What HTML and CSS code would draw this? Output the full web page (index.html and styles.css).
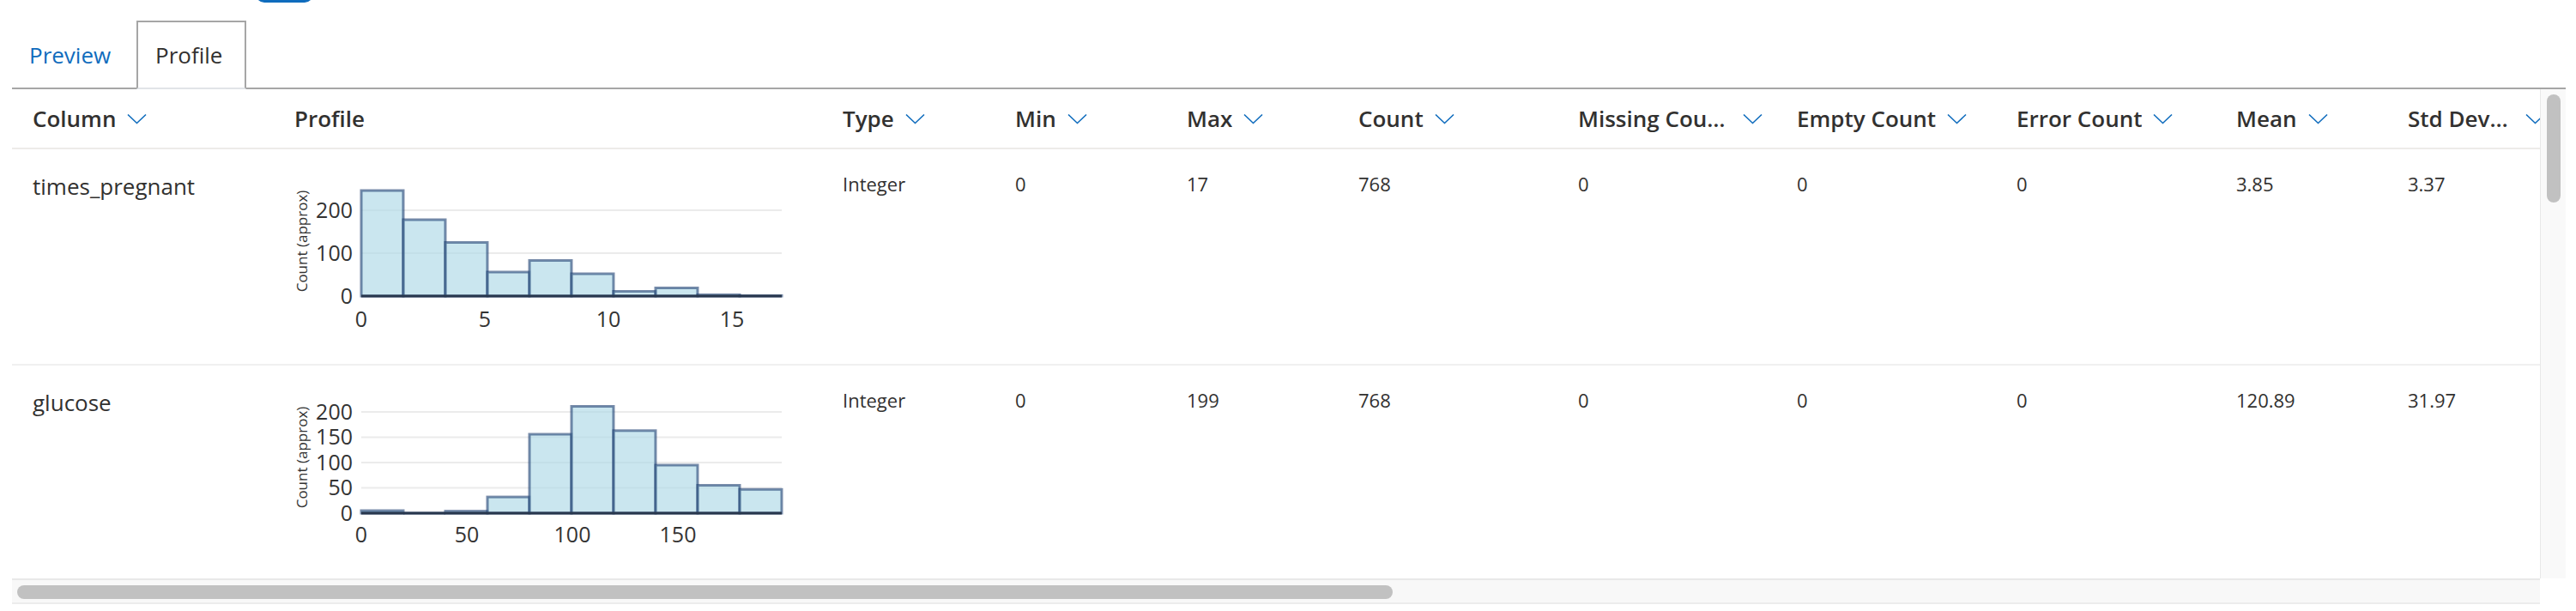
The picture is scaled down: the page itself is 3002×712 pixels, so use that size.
FILE: index.html
```html
<!DOCTYPE html>
<html lang="en">
<head>
<meta charset="utf-8">
<title>Profile</title>
<link rel="stylesheet" href="styles.css">
</head>
<body>
<div class="topbar"><div class="pill"></div></div>
<div class="tabs">
  <div class="tab link">Preview</div>
  <div class="tab active">Profile</div>
</div>
<div class="frame">
  <div class="viewport">
    <div class="table">
      <div class="hrow">
        <div class="hcell"><span class="htext">Column</span><svg class="chev" viewBox="0 0 23 13"><path d="M1 1.5 L11.5 11.5 L22 1.5"/></svg></div>
        <div class="hcell"><span class="htext">Profile</span></div>
        <div class="hcell"><span class="htext">Type</span><svg class="chev" viewBox="0 0 23 13"><path d="M1 1.5 L11.5 11.5 L22 1.5"/></svg></div>
        <div class="hcell"><span class="htext">Min</span><svg class="chev" viewBox="0 0 23 13"><path d="M1 1.5 L11.5 11.5 L22 1.5"/></svg></div>
        <div class="hcell"><span class="htext">Max</span><svg class="chev" viewBox="0 0 23 13"><path d="M1 1.5 L11.5 11.5 L22 1.5"/></svg></div>
        <div class="hcell"><span class="htext">Count</span><svg class="chev" viewBox="0 0 23 13"><path d="M1 1.5 L11.5 11.5 L22 1.5"/></svg></div>
        <div class="hcell trunc"><span class="htext">Missing Count</span><svg class="chev" viewBox="0 0 23 13"><path d="M1 1.5 L11.5 11.5 L22 1.5"/></svg></div>
        <div class="hcell"><span class="htext">Empty Count</span><svg class="chev" viewBox="0 0 23 13"><path d="M1 1.5 L11.5 11.5 L22 1.5"/></svg></div>
        <div class="hcell"><span class="htext">Error Count</span><svg class="chev" viewBox="0 0 23 13"><path d="M1 1.5 L11.5 11.5 L22 1.5"/></svg></div>
        <div class="hcell"><span class="htext">Mean</span><svg class="chev" viewBox="0 0 23 13"><path d="M1 1.5 L11.5 11.5 L22 1.5"/></svg></div>
        <div class="hcell trunc"><span class="htext">Std Deviation</span><svg class="chev" viewBox="0 0 23 13"><path d="M1 1.5 L11.5 11.5 L22 1.5"/></svg></div>
      </div>

      <div class="row">
        <div class="cell name">times_pregnant</div>
        <div class="cell chart">
          <svg class="hist" width="580" height="250" viewBox="0 0 580 250">
            <g class="grid">
              <line x1="78" y1="121" x2="568" y2="121"/>
              <line x1="78" y1="71" x2="568" y2="71"/>
            </g>
            <g class="bars">
              <rect x="78" y="48" width="49" height="123"/>
              <rect x="127" y="82" width="49" height="89"/>
              <rect x="176" y="108.5" width="49" height="62.5"/>
              <rect x="225" y="143" width="49" height="28"/>
              <rect x="274" y="129.5" width="49" height="41.5"/>
              <rect x="323" y="145" width="49" height="26"/>
              <rect x="372" y="165.5" width="49" height="5.5"/>
              <rect x="421" y="161.5" width="49" height="9.5"/>
              <rect x="470" y="169.5" width="49" height="1.5"/>
              <rect x="519" y="170.5" width="49" height="0.5"/>
            </g>
            <line class="axis" x1="78" y1="171" x2="568" y2="171"/>
            <g class="yt">
              <text x="68" y="179.5">0</text>
              <text x="68" y="129.5">100</text>
              <text x="68" y="79.5">200</text>
            </g>
            <g class="xt">
              <text x="78" y="206.5">0</text>
              <text x="222" y="206.5">5</text>
              <text x="366" y="206.5">10</text>
              <text x="510" y="206.5">15</text>
            </g>
            <text class="ytitle" transform="translate(15 107) rotate(-90)">Count (approx)</text>
          </svg>
        </div>
        <div class="cell">Integer</div>
        <div class="cell">0</div>
        <div class="cell">17</div>
        <div class="cell">768</div>
        <div class="cell">0</div>
        <div class="cell">0</div>
        <div class="cell">0</div>
        <div class="cell">3.85</div>
        <div class="cell">3.37</div>
      </div>

      <div class="row">
        <div class="cell name">glucose</div>
        <div class="cell chart">
          <svg class="hist" width="580" height="250" viewBox="0 0 580 250">
            <g class="grid">
              <line x1="78" y1="142.5" x2="568" y2="142.5"/>
              <line x1="78" y1="113" x2="568" y2="113"/>
              <line x1="78" y1="83.5" x2="568" y2="83.5"/>
              <line x1="78" y1="54" x2="568" y2="54"/>
            </g>
            <g class="bars">
              <rect x="78" y="169" width="49" height="3"/>
              <line x1="127" y1="172" x2="176" y2="172"/>
              <rect x="176" y="169.6" width="49" height="2.4"/>
              <rect x="225" y="153.1" width="49" height="18.9"/>
              <rect x="274" y="80" width="49" height="92"/>
              <rect x="323" y="47.5" width="49" height="124.5"/>
              <rect x="372" y="75.8" width="49" height="96.2"/>
              <rect x="421" y="116" width="49" height="56"/>
              <rect x="470" y="139.5" width="49" height="32.5"/>
              <rect x="519" y="144.3" width="49" height="27.7"/>
            </g>
            <line class="axis" x1="78" y1="172" x2="568" y2="172"/>
            <g class="yt">
              <text x="68" y="180.5">0</text>
              <text x="68" y="151">50</text>
              <text x="68" y="121.5">100</text>
              <text x="68" y="92">150</text>
              <text x="68" y="62.5">200</text>
            </g>
            <g class="xt">
              <text x="78" y="205.5">0</text>
              <text x="201" y="205.5">50</text>
              <text x="324" y="205.5">100</text>
              <text x="447" y="205.5">150</text>
            </g>
            <text class="ytitle" transform="translate(15 107) rotate(-90)">Count (approx)</text>
          </svg>
        </div>
        <div class="cell">Integer</div>
        <div class="cell">0</div>
        <div class="cell">199</div>
        <div class="cell">768</div>
        <div class="cell">0</div>
        <div class="cell">0</div>
        <div class="cell">0</div>
        <div class="cell">120.89</div>
        <div class="cell">31.97</div>
      </div>
    </div>
  </div>
  <div class="vscroll"><div class="vthumb"></div></div>
  <div class="hscroll"><div class="hthumb"></div></div>
  <div class="corner"></div>
</div>
</body>
</html>
```

FILE: styles.css
```css
html, body {
  margin: 0;
  padding: 0;
  background: #ffffff;
}

body {
  font-family: "Open Sans", "Noto Sans", sans-serif;
  color: #323130;
  width: 3002px;
  height: 712px;
  overflow: hidden;
}

.topbar {
  height: 24px;
  overflow: hidden;
  padding-left: 298px;
}

.pill {
  width: 67px;
  height: 20px;
  margin-top: -17px;
  border-radius: 10px;
  background: #0f6cbd;
}

.tabs {
  display: flex;
  align-items: flex-start;
  height: 78px;
  margin: 0 12px 0 14px;
  border-bottom: 2px solid #a6a6a6;
}

.tab {
  box-sizing: border-box;
  height: 80px;
  display: flex;
  align-items: center;
  font-size: 26px;
  line-height: 36px;
  border: 2px solid transparent;
}

.tab.link {
  width: 145px;
  padding-left: 18px;
  color: #0f6cbd;
}

.tab.active {
  width: 128px;
  padding-left: 20px;
  color: #323130;
  border-color: #a6a6a6;
  border-bottom-color: #e1e4e8;
  background: #ffffff;
}

.frame {
  display: grid;
  grid-template-columns: 1fr 30px;
  grid-template-rows: 570px 30px;
  margin: 0 12px 0 14px;
}

.viewport {
  overflow: hidden;
  min-width: 0;
}

.table {
  width: max-content;
}

.hrow,
.row {
  display: grid;
  grid-template-columns: 305px 639px 201px 200px 200px 256px 255px 256px 256px 200px 200px;
}

.hrow {
  height: 68px;
  border-bottom: 2px solid #edebe9;
}

.hcell {
  display: flex;
  align-items: center;
  gap: 13px;
  min-width: 0;
  padding: 0 16px 0 24px;
  font-size: 26px;
  line-height: 36px;
  font-weight: 600;
  color: #323130;
}

.hcell.trunc {
  gap: 20px;
}

.htext {
  white-space: nowrap;
  overflow: hidden;
  text-overflow: ellipsis;
  min-width: 0;
  max-width: calc(100% - 42px);
}

.chev {
  flex: none;
  width: 23px;
  height: 13px;
}

.chev path {
  fill: none;
  stroke: #0f6cbd;
  stroke-width: 1.6;
}

.row {
  height: 250px;
  border-bottom: 2px solid #f0f0f0;
}

.cell {
  padding: 25px 24px 0 24px;
  font-size: 22px;
  line-height: 31px;
  white-space: nowrap;
  overflow: hidden;
}

.cell.name {
  font-size: 26px;
  line-height: 36px;
}

.cell.chart {
  padding: 0 0 0 24px;
}

.hist {
  display: block;
  font-family: "Open Sans", sans-serif;
}

.hist .grid line {
  stroke: #ebebeb;
  stroke-width: 2;
}

.hist .bars rect,
.hist .bars line {
  fill: #add8e6;
  fill-opacity: 0.65;
  stroke: #1e3f72;
  stroke-opacity: 0.6;
  stroke-width: 3;
}

.hist .axis {
  stroke: #28374d;
  stroke-width: 3;
}

.hist .yt text {
  font-size: 25px;
  fill: #333333;
  text-anchor: end;
}

.hist .xt text {
  font-size: 25px;
  fill: #333333;
  text-anchor: middle;
}

.hist .ytitle {
  font-size: 17px;
  fill: #333333;
  text-anchor: middle;
}

.vscroll {
  box-sizing: border-box;
  background: #f9f9f9;
  border-left: 1px solid #e8e8e8;
  padding: 6px 0 0 7px;
}

.vthumb {
  width: 16px;
  height: 126px;
  border-radius: 8px;
  background: #c1c1c1;
}

.hscroll {
  box-sizing: border-box;
  background: #f8f8f8;
  border-top: 2px solid #e8e8e8;
  border-bottom: 2px solid #ececec;
  padding: 6px 0 0 6px;
}

.hthumb {
  width: 1603px;
  height: 16px;
  border-radius: 8px;
  background: #c1c1c1;
}

.corner {
  background: #ffffff;
}
```
